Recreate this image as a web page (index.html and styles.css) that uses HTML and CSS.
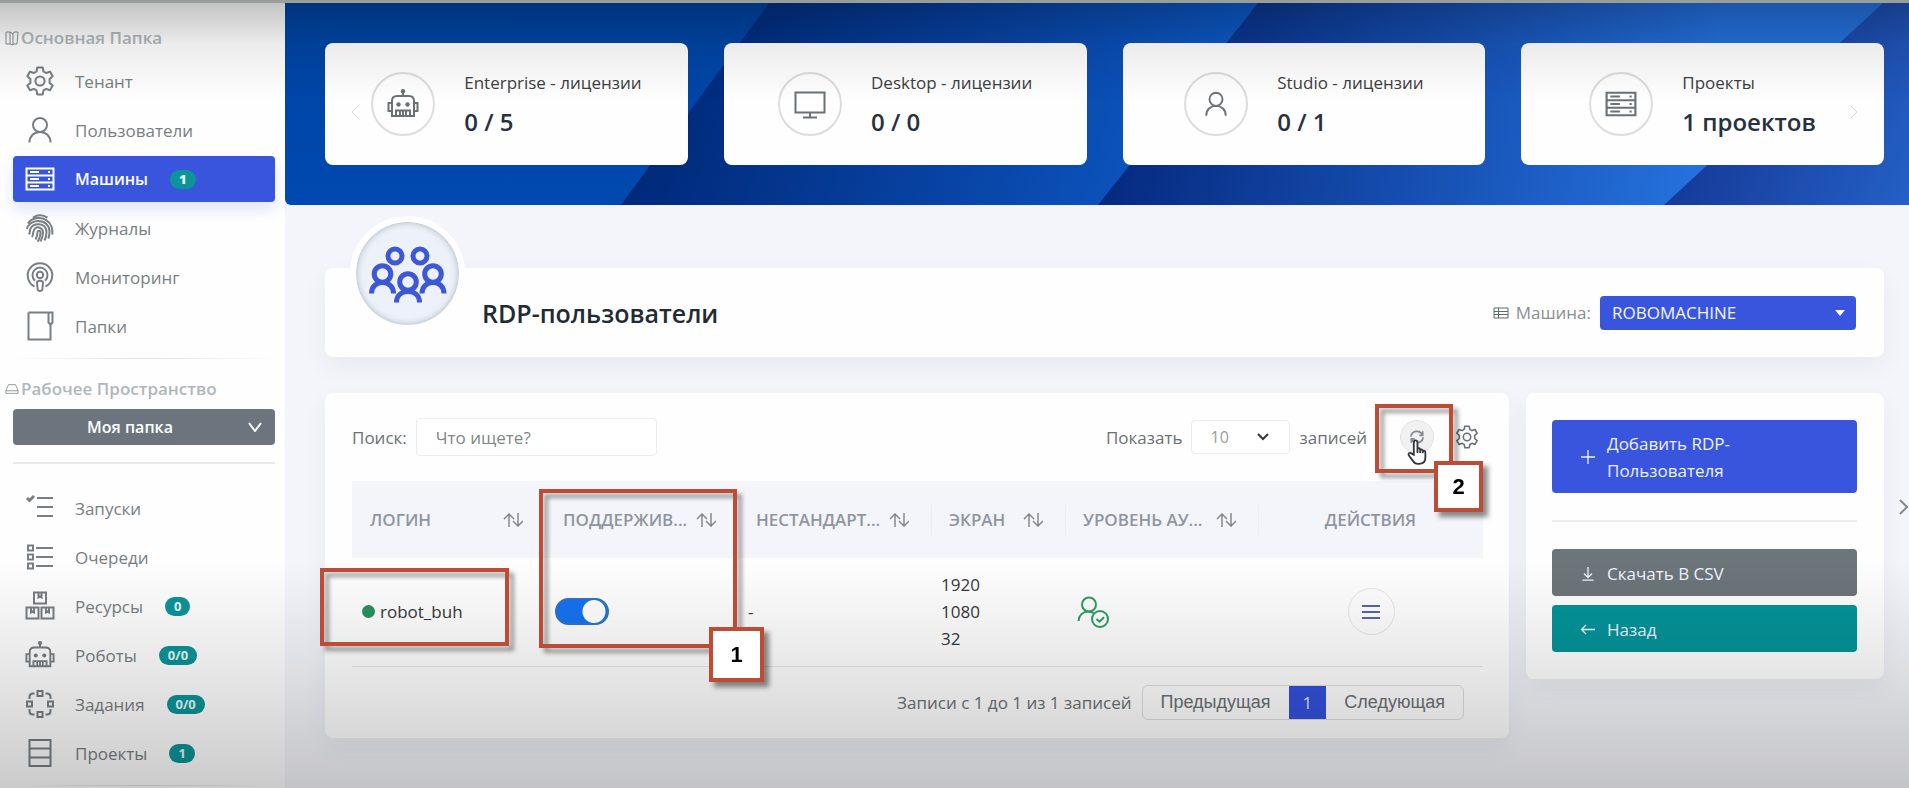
FILE: index.html
```html
<!DOCTYPE html>
<html lang="ru">
<head>
<meta charset="utf-8">
<title>RDP-пользователи</title>
<link rel="stylesheet" href="styles.css">
</head>
<body>
<svg class="sprite" aria-hidden="true">
  <symbol id="i-gear" viewBox="0 0 30 30"><path d="M12.300 1.500h5.400l.8 4 2.600 1.500 3.900-1.400 2.700 4.700-3.100 2.700v3.900l3.100 2.700-2.700 4.700-3.900-1.400-2.600 1.500-.8 4.100h-5.400l-.8-4.100-2.600-1.500L5 24.300l-2.700-4.700 3.100-2.700v-3.900l-3.100-2.700L5 5.600l3.900 1.400 2.600-1.500z" stroke-linejoin="round"/><circle cx="15" cy="15" r="4.600"/></symbol>
  <symbol id="i-user" viewBox="0 0 30 30"><circle cx="15" cy="10" r="7"/><path d="M4.500 27.500c0-6.500 4.700-10.500 10.500-10.500s10.500 4 10.500 10.500"/></symbol>
  <symbol id="i-server" viewBox="0 0 30 30"><path d="M1.500 4.500h27v21h-27zM1.500 11.500h27M1.500 18.500h27"/><path d="M5 8h9M5 15h9M5 22h9M23 8h2M23 15h2M23 22h2"/></symbol>
  <symbol id="i-finger" viewBox="0 0 30 30"><path d="M8 4.500c4.500-2.800 10-2.800 14.500.2M3 10.500c2-3.300 6-5.200 10-5.500 6-.3 11.500 3 13.500 8.500 1 3 1 5 .8 8M2 16c.5-4 5-8 11-8 7 0 11.500 4.500 11.500 10.500 0 2.500-.3 5-1.200 7M4 21.500c1.200-2 .5-4 1.500-6 1.500-3 5-4.500 8.500-4.300 4.500.3 7.500 3.300 7.500 7.800 0 3-.6 6-2 8.500M7 24c2-3 .5-6.500 3-8.500 3-2.500 8-.5 8 4 0 3-1 6-2.500 9M10.500 26.500c2.500-4 1.500-6 2-7.500.8-2 3-1.500 3 .8 0 3-1.200 6-2.700 9"/></symbol>
  <symbol id="i-cast" viewBox="0 0 30 30"><circle cx="15" cy="13" r="3.200"/><path d="M10 18.700a7.500 7.500 0 1 1 10 0M9.500 24.500a12.300 12.300 0 1 1 11 0"/><path d="M12 21q0-2.200 3-2.200t3 2.200l-.6 6q-.2 2-2.400 2t-2.400-2z"/></symbol>
  <symbol id="i-folder" viewBox="0 0 30 30"><path d="M3.500 1.500h24v10l-2 2-2-2v-10M25.500 13v15.500h-22v-27"/></symbol>
  <symbol id="i-book" viewBox="0 0 14 16"><path d="M1 2h4v12H1zM5 2l3 2v11l-3-1M8 4l1-2h4l-1 12H8"/></symbol>
  <symbol id="i-drive" viewBox="0 0 16 14"><path d="M1 9l3-7h8l3 7v3H1zM1 9h14"/></symbol>
  <symbol id="i-runs" viewBox="0 0 30 30"><path d="M12 5h16M12 14h16M12 23h16"/><path d="M2 5l2.500 2.500L9 3" stroke-width="3"/></symbol>
  <symbol id="i-queue" viewBox="0 0 30 30"><path d="M11 6h17M11 15h17M11 24h17M3 3.500h5v5H3zM3 12.500h5v5H3zM3 21.500h5v5H3z"/></symbol>
  <symbol id="i-boxes" viewBox="0 0 30 30"><path d="M9 1.500h12v11H9zM1.500 16.500h12v11h-12zM16.500 16.500h12v11h-12zM13.500 2v4.500l1.500-1 1.500 1V2M6 17v4.500l1.500-1 1.500 1V17M21 17v4.500l1.500-1 1.500 1V17"/></symbol>
  <symbol id="i-robot" viewBox="0 0 32 32"><path d="M16 3v5M5 28V13q0-5 5-5h12q5 0 5 5v15zM5 15H1.500v8H5M27 15h3.500v8H27M9 28v-5.500h14V28M13 23v5M16 23v5M19 23v5"/><g class="solid"><circle cx="16" cy="3.200" r="2.200"/><circle cx="11.500" cy="16.500" r="2.200"/><circle cx="20.500" cy="16.500" r="2.200"/></g></symbol>
  <symbol id="i-flow" viewBox="0 0 30 30"><path d="M12.500 2h5v5h-5zM12.500 23h5v5h-5zM2 12.500h5v5H2zM23 12.500h5v5h-5zM9.500 4.500H8q-3.500 0-3.500 3.500v2M20.500 4.500H22q3.500 0 3.500 3.500v2M9.500 25.500H8q-3.500 0-3.500-3.500v-2M20.500 25.500H22q3.500 0 3.500-3.500v-2"/></symbol>
  <symbol id="i-rows" viewBox="0 0 30 30"><path d="M4.500 2h21v26h-21zM4.500 10.500h21M4.500 19.500h21"/></symbol>
  <symbol id="i-monitor" viewBox="0 0 32 32"><path d="M1.500 4.500h29v20h-29zM16 25v4M9 29.500h14"/></symbol>
  <symbol id="i-sort" viewBox="0 0 20 14"><path d="M6 14V1M1 6l5-5 5 5M15 0v13M10 8l5 5 5-5"/></symbol>
</svg>

<div class="app">
  <aside class="sidebar">
    <h2 class="side-title"><svg class="ic-title"><use href="#i-book"/></svg>Основная Папка</h2>
    <nav class="menu">
      <a class="item" href="#"><svg class="ic"><use href="#i-gear"/></svg><span>Тенант</span></a>
      <a class="item" href="#"><svg class="ic"><use href="#i-user"/></svg><span>Пользователи</span></a>
      <a class="item active" href="#"><svg class="ic"><use href="#i-server"/></svg><span>Машины</span><b class="badge">1</b></a>
      <a class="item" href="#"><svg class="ic"><use href="#i-finger"/></svg><span>Журналы</span></a>
      <a class="item" href="#"><svg class="ic"><use href="#i-cast"/></svg><span>Мониторинг</span></a>
      <a class="item" href="#"><svg class="ic"><use href="#i-folder"/></svg><span>Папки</span></a>
    </nav>
    <hr class="rule soft">
    <h2 class="side-title second"><svg class="ic-title"><use href="#i-drive"/></svg>Рабочее Пространство</h2>
    <button class="space-btn" type="button"><span>Моя папка</span><svg class="chev" viewBox="0 0 14 10"><path d="M1 1l6 8 6-8"/></svg></button>
    <hr class="rule">
    <nav class="menu lower">
      <a class="item" href="#"><svg class="ic"><use href="#i-runs"/></svg><span>Запуски</span></a>
      <a class="item" href="#"><svg class="ic"><use href="#i-queue"/></svg><span>Очереди</span></a>
      <a class="item" href="#"><svg class="ic"><use href="#i-boxes"/></svg><span>Ресурсы</span><b class="badge">0</b></a>
      <a class="item" href="#"><svg class="ic"><use href="#i-robot"/></svg><span>Роботы</span><b class="badge">0/0</b></a>
      <a class="item" href="#"><svg class="ic"><use href="#i-flow"/></svg><span>Задания</span><b class="badge">0/0</b></a>
      <a class="item" href="#"><svg class="ic"><use href="#i-rows"/></svg><span>Проекты</span><b class="badge">1</b></a>
    </nav>
    <hr class="rule soft">
  </aside>

  <main class="main">
    <section class="banner">
      <svg class="banner-bg" viewBox="0 0 1624 202" preserveAspectRatio="none" aria-hidden="true">
        <defs>
          <linearGradient id="g1" x1="0" y1="0" x2="0" y2="1"><stop offset="0" stop-color="#0044a2"/><stop offset="1" stop-color="#0049b0"/></linearGradient>
          <linearGradient id="g2" gradientUnits="userSpaceOnUse" x1="380" y1="40" x2="900" y2="200"><stop offset="0" stop-color="#002878"/><stop offset="1" stop-color="#0d58c4"/></linearGradient>
          <linearGradient id="g3" gradientUnits="userSpaceOnUse" x1="850" y1="60" x2="1400" y2="190"><stop offset="0" stop-color="#062a80"/><stop offset="1" stop-color="#2470dc"/></linearGradient>
          <linearGradient id="g4" gradientUnits="userSpaceOnUse" x1="1400" y1="100" x2="1624" y2="200"><stop offset="0" stop-color="#143794"/><stop offset="1" stop-color="#2460c6"/></linearGradient>
        </defs>
        <path fill="url(#g1)" d="M0 0h1624v202H0z"/>
        <path fill="url(#g2)" d="M484 0h1140v202H336z"/>
        <path fill="url(#g3)" d="M973 0h651v202H813z"/>
        <path fill="url(#g4)" d="M1598 0h26v202h-245z"/>
      </svg>
      <div class="cards">
        <article class="card">
          <button class="arrow prev" type="button" aria-label="Назад"><svg viewBox="0 0 8 14"><path d="M7 1L1 7l6 6"/></svg></button>
          <span class="ring"><svg><use href="#i-robot"/></svg></span>
          <div><p class="card-name">Enterprise - лицензии</p><p class="card-value">0 / 5</p></div>
        </article>
        <article class="card">
          <span class="ring"><svg><use href="#i-monitor"/></svg></span>
          <div><p class="card-name">Desktop - лицензии</p><p class="card-value">0 / 0</p></div>
        </article>
        <article class="card">
          <span class="ring"><svg class="small"><use href="#i-user"/></svg></span>
          <div><p class="card-name">Studio - лицензии</p><p class="card-value">0 / 1</p></div>
        </article>
        <article class="card">
          <span class="ring"><svg><use href="#i-server"/></svg></span>
          <div><p class="card-name">Проекты</p><p class="card-value">1 проектов</p></div>
          <button class="arrow next" type="button" aria-label="Вперёд"><svg viewBox="0 0 8 14"><path d="M1 1l6 6-6 6"/></svg></button>
        </article>
      </div>
    </section>

    <div class="content">
      <header class="panel head">
        <span class="avatar">
          <svg viewBox="0 0 80 58"><circle cx="27" cy="11" r="7"/><circle cx="52" cy="11" r="7"/><circle cx="14.500" cy="29" r="8.300"/><circle cx="65" cy="29" r="8.300"/><circle cx="40" cy="37" r="8.300"/><path d="M3.500 48.500c0-7 5-11 11-11s11 4 11 11M54 48.500c0-7 5-11 11-11s11 4 11 11M28.500 57.500c0-7 5-11 11.500-11s11.500 4 11.500 11"/></svg>
        </span>
        <h1>RDP-пользователи</h1>
        <label class="machine-label" for="machine"><svg viewBox="0 0 16 12"><path d="M1 1h14v10H1zM1 4.500h14M1 7.500h14M5.500 1v10"/></svg>Машина:</label>
        <span class="select-wrap machine">
          <select id="machine"><option>ROBOMACHINE</option></select>
          <svg viewBox="0 0 10 6"><path d="M0 0h10L5 6z"/></svg>
        </span>
      </header>

      <div class="columns">
        <section class="panel list">
          <div class="toolbar">
            <label for="q">Поиск:</label>
            <input id="q" type="text" placeholder="Что ищете?">
            <label class="show" for="len">Показать</label>
            <span class="select-wrap len">
              <select id="len"><option>10</option></select>
              <svg viewBox="0 0 12 8"><path d="M1 1l5 5 5-5"/></svg>
            </span>
            <span>записей</span>
            <span class="refresh">
              <button type="button" aria-label="Обновить"><svg viewBox="0 0 16 16"><path d="M1 7.500a7 7 0 0 1 13-2.500M14.500 1.500V6h-4M15 8.500A7 7 0 0 1 2 11M1.500 14.500V10h4"/></svg></button>
              <svg class="hand" viewBox="0 0 22 28"><path d="M7.500 17V3.500q0-2.300 2-2.300t2 2.300V11l0-1q2.700-.6 3 1.200 2.500-.4 2.800 1.300 2.900-.4 2.900 2V20q0 7-7 7h-1.500q-3.200 0-5-3L2 17.700q-.8-2 .6-2.600 1.400-.5 2.600.7zM11.500 10.500V15M14.500 11.200V15M17.300 12.500V15.500"/></svg>
              <i class="mark mark-refresh"></i><b class="tag tag-two">2</b>
            </span>
            <button class="gear" type="button" aria-label="Настройки"><svg><use href="#i-gear"/></svg></button>
          </div>

          <table>
            <colgroup><col class="c-wide"><col class="c-wide"><col class="c-wide"><col class="c-mid"><col class="c-wide"><col class="c-act"></colgroup>
            <thead>
              <tr>
                <th><div class="th"><span>ЛОГИН</span><svg><use href="#i-sort"/></svg></div></th>
                <th><div class="th"><span>ПОДДЕРЖИВ...</span><svg><use href="#i-sort"/></svg></div><i class="mark mark-support"></i><b class="tag tag-one">1</b></th>
                <th><div class="th"><span>НЕСТАНДАРТ...</span><svg><use href="#i-sort"/></svg></div></th>
                <th><div class="th"><span>ЭКРАН</span><svg><use href="#i-sort"/></svg></div></th>
                <th><div class="th"><span>УРОВЕНЬ АУ...</span><svg><use href="#i-sort"/></svg></div></th>
                <th class="actions">ДЕЙСТВИЯ</th>
              </tr>
            </thead>
            <tbody>
              <tr>
                <td><span class="login"><span class="dot"></span>robot_buh</span><i class="mark mark-login"></i></td>
                <td><input class="switch" type="checkbox" checked aria-label="Поддерживать сессию"></td>
                <td>-</td>
                <td>1920<br>1080<br>32</td>
                <td><svg class="ok" viewBox="0 0 32 32"><circle cx="12" cy="8.500" r="7"/><path d="M1.500 25c.5-6 4.500-9.500 10-9.500 2.500 0 4 .7 5.500 1.800"/><circle cx="23" cy="23" r="8"/><path d="M19.500 23l3 2.700 4.500-4.400"/></svg></td>
                <td class="actions"><button class="more" type="button" aria-label="Действия"><svg viewBox="0 0 18 16"><path d="M0 2h18M0 8h18M0 14h18"/></svg></button></td>
              </tr>
            </tbody>
          </table>

          <div class="pager">
            <span>Записи с 1 до 1 из 1 записей</span>
            <div class="pages">
              <button type="button">Предыдущая</button><button class="current" type="button">1</button><button type="button">Следующая</button>
            </div>
          </div>
        </section>

        <aside class="panel tools">
          <button class="btn primary" type="button"><svg viewBox="0 0 16 16"><path d="M8 1v14M1 8h14"/></svg><span>Добавить RDP-Пользователя</span></button>
          <hr>
          <button class="btn gray" type="button"><svg viewBox="0 0 16 16"><path d="M8 2v10M4 8.500l4 4 4-4M2.500 15.200h11"/></svg><span>Скачать В CSV</span></button>
          <button class="btn teal" type="button"><svg viewBox="0 0 16 16"><path d="M15 8.500H1.500M6 4L1.500 8.500 6 13"/></svg><span>Назад</span></button>
        </aside>
      </div>
    </div>
    <button class="drawer" type="button" aria-label="Открыть панель"><svg viewBox="0 0 9 16"><path d="M1 1l7 7-7 7"/></svg></button>
  </main>
</div>
</body>
</html>
```
FILE: styles.css
```css
* { box-sizing: border-box; }
body {
  margin: 0;
  min-height: 100vh;
  background: #f4f5fa;
  color: #6b7074;
  font: 17px/27px "Open Sans", "Noto Sans", sans-serif;
  overflow: hidden;
}
/* vignette over the whole window */
body::after {
  content: "";
  position: fixed;
  inset: 0;
  z-index: 5;
  pointer-events: none;
  background:
    linear-gradient(rgba(0, 0, 0, .24), rgba(0, 0, 0, .07) 45px, transparent 100px),
    linear-gradient(transparent 560px, rgba(0, 0, 0, .09) 670px, rgba(0, 0, 0, .2));
}
button, input, select { font: inherit; color: inherit; margin: 0; }
button { border: 0; background: none; padding: 0; cursor: pointer; }
svg { fill: none; stroke: currentColor; stroke-width: 2; display: block; }
svg .solid { fill: currentColor; stroke: none; }
.sprite { position: absolute; width: 0; height: 0; }

.app { display: flex; min-height: 100vh; border-top: 3px solid #c9cfca; }

.sidebar { width: 285px; flex: none; background: #fefefe; padding: 20px 10px 0 13px; }
.side-title {
  display: flex; align-items: center; gap: 2px;
  margin: 0 0 5px -8px;
  font-size: 17px; line-height: 30px; font-weight: 600; color: #b0b7bb;
}
.ic-title { width: 14px; height: 16px; stroke-width: 1; color: #8a9094; }
.menu { display: flex; flex-direction: column; gap: 3px; }
.item {
  display: flex; align-items: center; height: 46px;
  padding-left: 12px; border-radius: 4px;
  color: #787e82; text-decoration: none;
}
.ic { width: 30px; height: 30px; margin-right: 20px; }
.badge {
  margin-left: 22px; padding: 0 9px; border-radius: 10px;
  background: #0d9498; color: #e2fbfb; font-size: 13px; line-height: 19px;
}
.active { background: #3955de; color: #fff; font-size: 16px; font-weight: 600; box-shadow: 0 8px 14px rgba(57, 85, 222, .15); }
.rule { height: 2px; margin: 17px 0; border: 0; background: #ebebeb; }
.rule.soft { height: 1px; margin: 9px 0 0; background: linear-gradient(90deg, transparent, #ddd, transparent); }
.side-title.second { margin-top: 15px; }
.space-btn {
  display: flex; align-items: center; width: 100%; height: 36px;
  padding: 0 13px; border-radius: 4px;
  background: #6c757d; color: #fff; font-weight: 600; font-size: 16px;
}
.space-btn span { flex: 1; padding-right: 14px; }
.chev { width: 14px; height: 10px; }
.lower { padding-top: 4px; }

.main { flex: 1; min-width: 0; position: relative; }
.banner { position: relative; padding: 40px 25px; border-radius: 0 0 0 6px; overflow: hidden; }
.banner-bg { position: absolute; inset: 0; width: 100%; height: 100%; stroke: none; }
.cards { position: relative; display: grid; grid-template-columns: repeat(4, 1fr); gap: 36px; padding-left: 15px; }
.card {
  position: relative; display: flex; align-items: center; justify-content: center; gap: 29px;
  height: 122px; border-radius: 8px; background: #fefefe;
}
.ring {
  display: grid; place-items: center; width: 64px; height: 64px;
  border: 2px solid #dcdcdc; border-radius: 50%; color: #6b7174;
}
.ring svg { width: 32px; height: 32px; }
.ring .small { width: 28px; height: 28px; }
.card p { margin: 0; }
.card-name { color: #3c4043; line-height: 30px; }
.card-value { padding-top: 6px; font-size: 24px; line-height: 36px; font-weight: 600; color: #283040; }
.arrow { position: absolute; top: 62px; color: #d9d9d9; }
.arrow svg { width: 8px; height: 14px; stroke-width: 1; }
.prev { left: 26px; }
.next { right: 26px; }

.content { padding: 63px 25px 0 40px; }
.panel { background: #fefefe; border-radius: 8px; box-shadow: 0 10px 24px rgba(60, 60, 110, .06); }
.head { position: relative; display: flex; align-items: center; height: 89px; padding: 0 28px 0 157px; }
.avatar {
  position: absolute; left: 25px; top: -52px;
  display: grid; place-items: center; width: 115px; height: 115px;
  border: 6px solid #fefefe; border-radius: 50%;
  background: #edf2fa; box-shadow: inset 0 0 7px rgba(60, 80, 90, .4);
}
.avatar svg { width: 80px; height: 58px; stroke: #3d57d6; stroke-width: 5; }
h1 { margin: 0; flex: 1; font-size: 25px; line-height: 36px; font-weight: 600; color: #222a33; }
.machine-label { display: flex; align-items: center; gap: 7px; margin-right: 9px; color: #8a8f94; }
.machine-label svg { width: 16px; height: 12px; stroke-width: 1; color: #5c6d66; }
.select-wrap { position: relative; }
.select-wrap select { appearance: none; width: 100%; height: 100%; border-radius: 4px; display: block; }
.select-wrap svg { position: absolute; top: 50%; transform: translateY(-50%); pointer-events: none; }
.machine { width: 256px; height: 34px; }
.machine select { border: 0; padding: 0 12px; background: #3955de; color: #f3f5ff; }
.machine svg { right: 11px; width: 10px; height: 6px; fill: #fff; stroke: none; }

.columns { display: grid; grid-template-columns: 1fr 358px; gap: 17px; align-items: start; padding-top: 36px; }
.list { padding: 25px 26px 18px 27px; }
.toolbar { display: flex; align-items: center; gap: 9px; height: 38px; margin-bottom: 25px; }
.toolbar input { width: 241px; height: 38px; padding: 0 19px; border: 1px solid #ebecef; border-radius: 4px; background: #fff; }
.toolbar input::placeholder { color: #80868a; opacity: 1; }
.show { margin-left: auto; }
.len { width: 99px; height: 34px; }
.len select { border: 1px solid #ebecef; background: #fff; color: #9a9d9f; padding: 0 18px; font-size: 16px; }
.len svg { right: 21px; width: 12px; height: 8px; color: #33383c; }
.refresh { position: relative; margin-left: 24px; }
.refresh button { display: grid; place-items: center; width: 34px; height: 34px; border: 1px solid #e2e2e4; border-radius: 50%; background: #f1f1f2; color: #858a8e; }
.refresh button svg { width: 14px; height: 14px; }
.hand { position: absolute; left: 7px; top: 18px; z-index: 1; width: 20px; height: 28px; fill: #fff; stroke: #34383c; }
.gear { margin: 0 4px 0 12px; }
.gear svg { width: 24px; height: 24px; }

.mark, .tag { position: absolute; z-index: 10; border: 4px solid #be4b33; }
.mark { filter: drop-shadow(5px 5px 2px rgba(0, 0, 0, .38)); pointer-events: none; }
.tag {
  display: grid; place-items: center; width: 55px; height: 55px; background: #fff;
  box-shadow: 5px 5px 5px rgba(0, 0, 0, .45); color: #000; font: 700 22px/22px "Liberation Sans", Arial, sans-serif;
}
.mark-refresh { left: -25px; top: -16px; width: 78px; height: 69px; }
.tag-two { left: 34px; top: 41px; width: 49px; height: 51px; }
.mark-support { left: -6px; top: 8px; width: 198px; height: 159px; }
.tag-one { left: 164px; top: 146px; }
.mark-login { left: -32px; top: 10px; width: 189px; height: 78px; }

table { width: 100%; border-collapse: collapse; table-layout: fixed; }
.c-wide { width: 193px; }
.c-mid { width: 134px; }
th { position: relative; height: 77px; padding: 0; background: #f4f5fa; color: #8f95a0; font-weight: 600; text-align: left; }
th + th::before { content: ""; position: absolute; left: 0; top: 24px; height: 30px; border-left: 1px solid #eceef3; }
.th { display: flex; align-items: center; justify-content: space-between; padding: 0 22px 0 18px; white-space: nowrap; }
.th svg { width: 20px; height: 14px; stroke-width: 1.4; flex: none; color: #7d8389; }
td { position: relative; height: 108px; padding: 0 9px 0 10px; border-bottom: 1px solid #e6e6e6; color: #35393c; }
.login { display: flex; align-items: center; gap: 5px; }
.dot { width: 13px; height: 13px; border-radius: 50%; background: #25935f; }
.actions { text-align: center; }
.switch {
  appearance: none; display: block; width: 54px; height: 27px; border-radius: 14px; border: 2px solid #2f74c8;
  background: radial-gradient(circle at 37px 50%, #fff 11px, #1673f0 12px);
}
.ok { width: 32px; height: 32px; margin-left: 2px; color: #2f9e63; }
.more { display: inline-grid; place-items: center; width: 47px; height: 47px; border: 1px solid #e6e6e8; border-radius: 50%; color: #5a63b0; vertical-align: middle; }
.more svg { width: 18px; height: 16px; }

.pager { display: flex; align-items: center; justify-content: flex-end; gap: 10px; padding: 18px 19px 0 0; }
.pages { display: flex; border: 1px solid #dedee0; border-radius: 6px; }
.pages button { height: 33px; padding: 0 18px; font-family: "Liberation Sans", Arial, sans-serif; font-size: 18px; }
.pages .current { padding: 0 14px; background: #3450dc; color: #dfe6ff; font-family: inherit; font-size: 17px; }

.tools { display: flex; flex-direction: column; padding: 27px 27px 27px 26px; gap: 9px; }
.tools hr { width: 100%; height: 2px; margin: 18px 0; border: 0; background: #ededed; }
.btn { display: flex; align-items: center; gap: 11px; min-height: 47px; padding: 10px 28px 9px; border-radius: 4px; color: #eef2ff; text-align: left; }
.btn svg { width: 16px; height: 16px; stroke-width: 1.3; flex: none; }
.btn span { max-width: 150px; }
.primary { background: #3955de; }
.gray { background: #6c757a; }
.teal { background: #049499; }
.drawer { position: absolute; right: 1px; top: 496px; color: #85898d; }
.drawer svg { width: 9px; height: 16px; }
```
